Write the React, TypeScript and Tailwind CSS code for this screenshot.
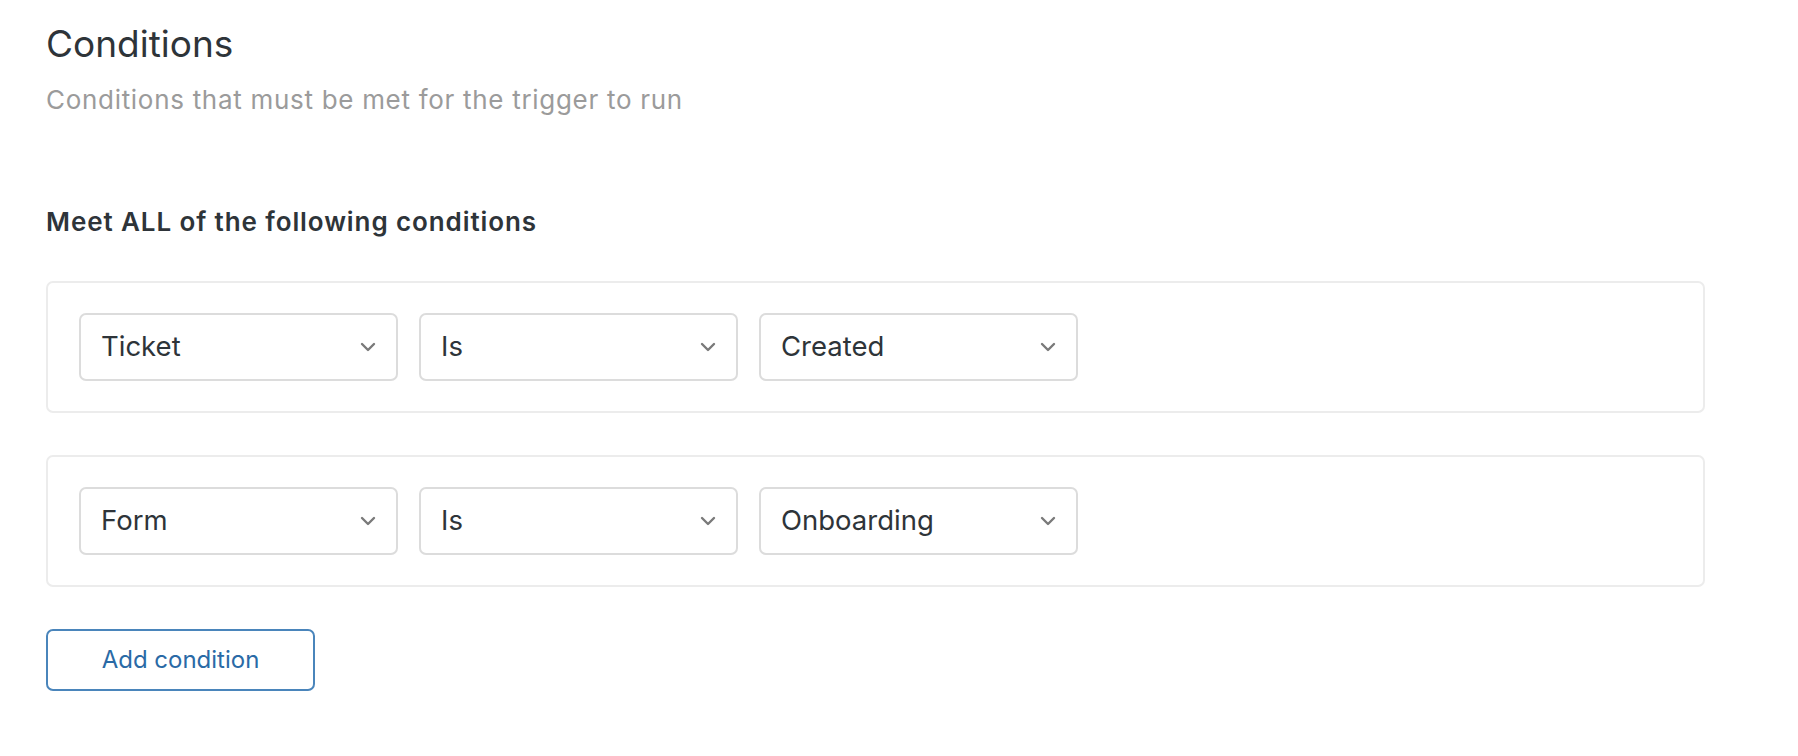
import React from 'react';

const rows = [
  ['Ticket', 'Is', 'Created'],
  ['Form', 'Is', 'Onboarding'],
];

const Chevron = () => (
  <svg width="16" height="10" viewBox="0 0 16 10" fill="none" className="shrink-0">
    <path d="M2 2l6 6 6-6" stroke="#7a7a7a" strokeWidth="2.4" strokeLinecap="round" strokeLinejoin="round" />
  </svg>
);

const Select = ({ value }: { value: string }) => (
  <div className="w-[319px] h-[68px] flex items-center justify-between pl-[20px] pr-[20px] border-2 border-[#dcdcdc] rounded-[7px] bg-white">
    <span className="text-[27.5px] leading-none text-[#2e3439]">{value}</span>
    <Chevron />
  </div>
);

const App: React.FC = () => {
  return (
    <div className="min-h-screen bg-white pl-[46px] pr-[93px] pt-[22px] font-['Inter','Liberation_Sans',sans-serif]">
      {/* Header */}
      <h1 className="text-[37px] leading-[43px] text-[#2e3439]">Conditions</h1>
      <p className="mt-[20px] text-[26px] leading-[30px] tracking-[0.7px] text-[#9b9b9b]">Conditions that must be met for the trigger to run</p>

      {/* Conditions */}
      <h2 className="mt-[92px] text-[26px] leading-[30px] font-semibold tracking-[0.9px] text-[#2e3439]">Meet ALL of the following conditions</h2>

      <div className="mt-[44px] flex flex-col gap-[42px]">
        {rows.map((row) => (
          <div key={row[0]} className="h-[132px] flex items-center gap-[21px] px-[31px] border-2 border-[#ececec] rounded-[7px]">
            {row.map((v, i) => (
              <Select key={i} value={v} />
            ))}
          </div>
        ))}
      </div>

      <button className="mt-[42px] w-[269px] h-[62px] flex items-center justify-center border-2 border-[#4a85bb] rounded-[7px] text-[24px] text-[#2a6aa6] bg-white">
        Add condition
      </button>
    </div>
  );
};

export default App;
